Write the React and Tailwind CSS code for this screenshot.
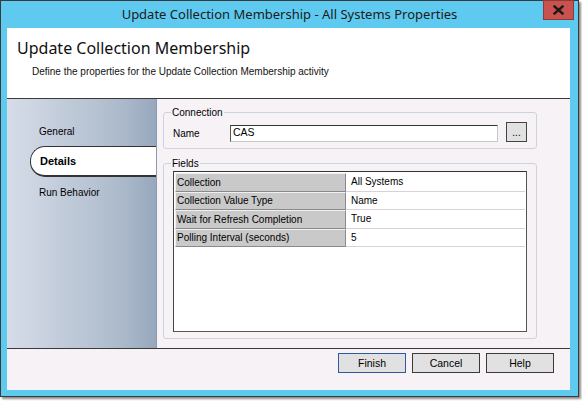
import React from 'react';

const rows = [
  { name: 'Collection', value: 'All Systems' },
  { name: 'Collection Value Type', value: 'Name' },
  { name: 'Wait for Refresh Completion', value: 'True' },
  { name: 'Polling Interval (seconds)', value: '5' },
];

const uiFont = { fontFamily: '"Liberation Sans", Arial, sans-serif' };
const titleFont = { fontFamily: '"Noto Sans", "Open Sans", sans-serif' };

const DialogButton = ({ children, isDefault }) => (
  <button
    className={`w-[68px] h-[20px] text-[10.5px] text-black bg-[#e1e1e1] border ${
      isDefault ? 'border-[#2d5a9c]' : 'border-[#3a3a3a]'
    } leading-none`}
  >
    {children}
  </button>
);

const Tab = ({ label, active }) =>
  active ? (
    <div className="ml-[23px] h-[31px] flex items-center pl-[9px] bg-white border border-r-0 border-[#333] border-b-2 rounded-l-[15px] font-bold text-[11px] text-black">
      {label}
    </div>
  ) : (
    <div className="ml-[32px] h-[30px] flex items-center text-[10px] text-black">{label}</div>
  );

export default function App() {
  return (
    <div className="w-[582px] h-[401px] bg-white" style={uiFont}>
      <div className="w-[579px] h-[397px] border border-[#3a3a3a] bg-[#5fcaef] flex flex-col shadow-[2px_2px_2px_rgba(0,0,0,0.45)]">
        {/* Title bar */}
        <div className="h-[27px] relative flex items-center justify-center shrink-0">
          <span className="text-[13px] text-[#1b1b1b] pt-[1px]" style={titleFont}>
            Update Collection Membership - All Systems Properties
          </span>
          <div className="absolute right-[4px] -top-px w-[31px] h-[20px] bg-[#c9524e] border border-[#8d3b38] flex items-center justify-center">
            <svg width="11" height="10" viewBox="0 0 11 10">
              <path d="M1.5 1.5 L9.5 8.5 M9.5 1.5 L1.5 8.5" stroke="#1a1a1a" strokeWidth="2.4" strokeLinecap="square" />
            </svg>
          </div>
        </div>

        {/* Client area */}
        <div className="ml-[6px] mr-[8px] mb-[6px] flex-1 flex flex-col bg-[#f6f2f6]">
          {/* Header */}
          <div className="h-[71px] bg-white border-b border-[#3a3a3a] shrink-0 pl-[10px] pt-[9px]">
            <div className="text-[16px] text-[#111] leading-[22px]" style={titleFont}>
              Update Collection Membership
            </div>
            <div className="text-[10px] text-[#111] pl-[15px] mt-[5px]">
              Define the properties for the Update Collection Membership activity
            </div>
          </div>

          {/* Middle */}
          <div className="flex-1 flex border-b border-[#3a3a3a]">
            <div className="w-[150px] shrink-0 bg-[linear-gradient(to_right,#d6dce8,#ccd4e2_20%,#c2ccdb_35%,#b9c5d4_55%,#a9b7c9_80%,#97a8bd)] border-r border-[#8a9ab0] pt-[17px] flex flex-col">
              <Tab label="General" />
              <Tab label="Details" active />
              <Tab label="Run Behavior" />
            </div>

            <div className="flex-1 pl-[6px] pr-[35px] pt-[6px] flex flex-col gap-[7px]">
              <fieldset className="border border-[#cdd3dc] rounded-[3px] px-[9px] pb-[6px]">
                <legend className="text-[10px] text-black px-[1px] -ml-[2px]">Connection</legend>
                <div className="flex items-center pt-[4px]">
                  <span className="text-[10px] text-black w-[57px] pt-[1px]">Name</span>
                  <div className="w-[268px] h-[17px] bg-white border border-[#c8c8c8] border-t-[#333] border-l-[#555] flex items-center pl-[2px] text-[10.5px] text-black">
                    CAS
                  </div>
                  <div className="ml-[8px] w-[21px] h-[20px] bg-[#e1e1e1] border border-[#444] flex items-end justify-center pb-[3px] text-[10px] leading-none text-black -mt-[2px]">
                    ...
                  </div>
                </div>
              </fieldset>

              <fieldset className="border border-[#cdd3dc] rounded-[3px] px-[9px] pb-[6px]">
                <legend className="text-[10px] text-black px-[1px] -ml-[2px]">Fields</legend>
                <div className="h-[161px] bg-white border border-[#555] border-t-[#333] border-l-[#444] p-[1px]">
                  {rows.map((r) => (
                    <div key={r.name} className="flex h-[18.5px]">
                      <div className="w-[171px] bg-[#c9c9c9] border border-[#f0f0f0] border-r-[#8a8a8a] border-b-[#8a8a8a] flex items-center pl-[1px] text-[10px] text-black">
                        {r.name}
                      </div>
                      <div className="flex-1 border-b border-[#dccfdc] flex items-center pl-[5px] text-[10px] text-black">
                        {r.value}
                      </div>
                    </div>
                  ))}
                </div>
              </fieldset>
            </div>
          </div>

          {/* Footer */}
          <div className="h-[41px] shrink-0 flex justify-end items-start pt-[4px] pr-[16px] gap-[6px]">
            <DialogButton isDefault>Finish</DialogButton>
            <DialogButton>Cancel</DialogButton>
            <DialogButton>Help</DialogButton>
          </div>
        </div>
      </div>
    </div>
  );
}
